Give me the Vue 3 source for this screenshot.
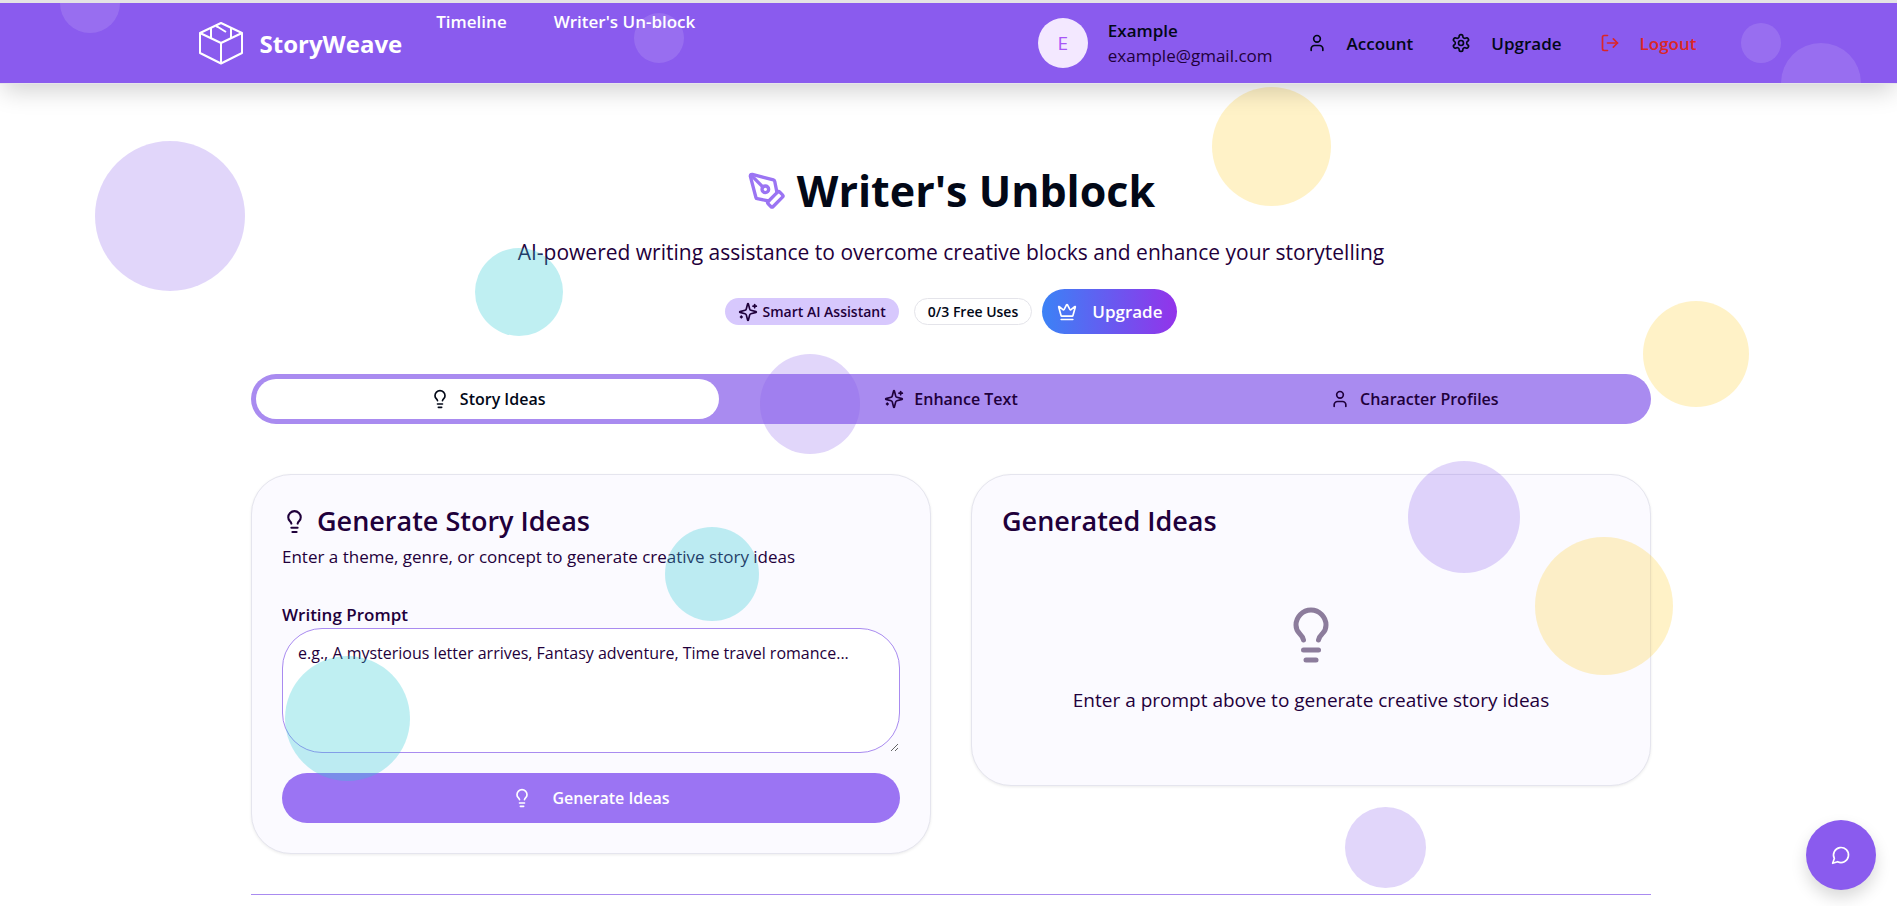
<script setup>
import { h, ref } from 'vue'

const shapes = {
  user: ['M19 21v-2a4 4 0 0 0-4-4H9a4 4 0 0 0-4 4v2', 'M8 7a4 4 0 1 0 8 0a4 4 0 1 0-8 0'],
  settings: [
    'M12.22 2h-.44a2 2 0 0 0-2 2v.18a2 2 0 0 1-1 1.73l-.43.25a2 2 0 0 1-2 0l-.15-.08a2 2 0 0 0-2.73.73l-.22.38a2 2 0 0 0 .73 2.73l.15.1a2 2 0 0 1 1 1.72v.51a2 2 0 0 1-1 1.74l-.15.09a2 2 0 0 0-.73 2.73l.22.38a2 2 0 0 0 2.73.73l.15-.08a2 2 0 0 1 2 0l.43.25a2 2 0 0 1 1 1.73V20a2 2 0 0 0 2 2h.44a2 2 0 0 0 2-2v-.18a2 2 0 0 1 1-1.73l.43-.25a2 2 0 0 1 2 0l.15.08a2 2 0 0 0 2.73-.73l.22-.39a2 2 0 0 0-.73-2.73l-.15-.08a2 2 0 0 1-1-1.74v-.5a2 2 0 0 1 1-1.74l.15-.09a2 2 0 0 0 .73-2.73l-.22-.38a2 2 0 0 0-2.73-.73l-.15.08a2 2 0 0 1-2 0l-.43-.25a2 2 0 0 1-1-1.73V4a2 2 0 0 0-2-2z',
    'M9 12a3 3 0 1 0 6 0a3 3 0 1 0-6 0'
  ],
  logout: ['M9 21H5a2 2 0 0 1-2-2V5a2 2 0 0 1 2-2h4', 'm16 17 5-5-5-5', 'M21 12H9'],
  bulb: [
    'M15 14c.2-1 .7-1.7 1.5-2.5 1-.9 1.5-2.2 1.5-3.5A6 6 0 0 0 6 8c0 1 .2 2.2 1.5 3.5.7.7 1.3 1.5 1.5 2.5',
    'M9 18h6',
    'M10 22h4'
  ],
  pen: [
    'M15.707 21.293a1 1 0 0 1-1.414 0l-1.586-1.586a1 1 0 0 1 0-1.414l5.586-5.586a1 1 0 0 1 1.414 0l1.586 1.586a1 1 0 0 1 0 1.414z',
    'm18 13-1.375-6.874a1 1 0 0 0-.746-.776L3.235 2.028a1 1 0 0 0-1.207 1.207L5.35 15.879a1 1 0 0 0 .776.746L13 18',
    'm2.3 2.3 7.286 7.286',
    'M9 11a2 2 0 1 0 4 0a2 2 0 1 0-4 0'
  ],
  sparkles: [
    'M9.937 15.5A2 2 0 0 0 8.5 14.063l-6.135-1.582a.5.5 0 0 1 0-.962L8.5 9.936A2 2 0 0 0 9.937 8.5l1.582-6.135a.5.5 0 0 1 .963 0L14.063 8.5A2 2 0 0 0 15.5 9.937l6.135 1.581a.5.5 0 0 1 0 .964L15.5 14.063a2 2 0 0 0-1.437 1.437l-1.582 6.135a.5.5 0 0 1-.963 0z',
    'M20 3v4',
    'M22 5h-4',
    'M4 17v2',
    'M5 18H3'
  ],
  crown: [
    'M11.562 3.266a.5.5 0 0 1 .876 0L15.39 8.87a1 1 0 0 0 1.516.294L21.183 5.5a.5.5 0 0 1 .798.519l-2.834 10.246a1 1 0 0 1-.956.734H5.81a1 1 0 0 1-.957-.734L2.02 6.02a.5.5 0 0 1 .798-.519l4.276 3.664a1 1 0 0 0 1.516-.294z',
    'M5 21h14'
  ],
  chat: ['M7.9 20A9 9 0 1 0 4 16.1L2 22Z']
}

const Icon = (props) =>
  h(
    'svg',
    {
      width: props.size,
      height: props.size,
      viewBox: '0 0 24 24',
      fill: 'none',
      stroke: 'currentColor',
      'stroke-width': 2,
      'stroke-linecap': 'round',
      'stroke-linejoin': 'round',
      'aria-hidden': 'true'
    },
    shapes[props.name].map((d) => h('path', { d }))
  )
Icon.props = { name: String, size: { type: Number, default: 20 } }

const tabs = [
  { id: 'ideas', label: 'Story Ideas', icon: 'bulb' },
  { id: 'enhance', label: 'Enhance Text', icon: 'sparkles' },
  { id: 'profiles', label: 'Character Profiles', icon: 'user' }
]
const active = ref('ideas')
const prompt = ref('')
</script>

<template>
  <div class="page">
    <header class="topbar">
      <div class="topbar-blobs" aria-hidden="true">
        <span class="dot dot-a"></span>
        <span class="dot dot-b"></span>
        <span class="dot dot-c"></span>
        <span class="dot dot-d"></span>
      </div>
      <div class="topbar-inner">
        <a class="brand" href="#">
          <svg class="brand-logo" viewBox="0 0 44 44" fill="none" stroke="currentColor" stroke-width="2" stroke-linejoin="round" aria-hidden="true">
            <path d="M22 2 43 12V32L22 42.500 1 32V12Z" />
            <path d="M1 12 22 22 43 12M22 22V42" />
            <path d="M12 7V17M32 7V17" />
            <path d="M17 5 19 6 27 11" />
          </svg>
          <span>StoryWeave</span>
        </a>
        <nav class="links">
          <a href="#">Timeline</a>
          <a href="#">Writer's Un-block</a>
        </nav>
        <div class="account">
          <span class="avatar">E</span>
          <div class="who">
            <strong>Example</strong>
            <span>example@gmail.com</span>
          </div>
          <div class="actions">
            <button type="button"><Icon name="user" />Account</button>
            <button type="button"><Icon name="settings" />Upgrade</button>
            <button type="button" class="danger"><Icon name="logout" />Logout</button>
          </div>
        </div>
      </div>
    </header>

    <main class="content">
      <section class="hero">
        <h1><Icon name="pen" :size="40" />Writer's Unblock</h1>
        <p>AI-powered writing assistance to overcome creative blocks and enhance your storytelling</p>
        <div class="badges">
          <span class="badge badge-fill"><Icon name="sparkles" />Smart AI Assistant</span>
          <span class="badge badge-line">0/3 Free Uses</span>
          <button type="button" class="upgrade"><Icon name="crown" />Upgrade</button>
        </div>
      </section>

      <div class="tabs" role="tablist">
        <button
          v-for="tab in tabs"
          :key="tab.id"
          type="button"
          role="tab"
          :aria-selected="active === tab.id"
          :class="{ on: active === tab.id }"
          @click="active = tab.id"
        >
          <Icon :name="tab.icon" />{{ tab.label }}
        </button>
      </div>

      <div class="cards">
        <section class="card">
          <div class="card-head">
            <h2><Icon name="bulb" :size="25" />Generate Story Ideas</h2>
            <p>Enter a theme, genre, or concept to generate creative story ideas</p>
          </div>
          <form class="form" @submit.prevent>
            <label for="prompt">Writing Prompt</label>
            <textarea
              id="prompt"
              v-model="prompt"
              placeholder="e.g., A mysterious letter arrives, Fantasy adventure, Time travel romance..."
            ></textarea>
            <button type="submit" class="generate"><Icon name="bulb" />Generate Ideas</button>
          </form>
        </section>

        <section class="card">
          <div class="card-head">
            <h2>Generated Ideas</h2>
          </div>
          <div class="empty">
            <Icon name="bulb" :size="60" />
            <p>Enter a prompt above to generate creative story ideas</p>
          </div>
        </section>
      </div>

      <hr class="rule" />
    </main>

    <div class="blobs" aria-hidden="true">
      <span class="blob violet blob-1"></span>
      <span class="blob yellow blob-2"></span>
      <span class="blob cyan blob-3"></span>
      <span class="blob violet blob-4"></span>
      <span class="blob yellow blob-5"></span>
      <span class="blob cyan blob-6"></span>
      <span class="blob cyan blob-7"></span>
      <span class="blob violet blob-8"></span>
      <span class="blob yellow blob-9"></span>
      <span class="blob violet blob-10"></span>
    </div>

    <button type="button" class="chat" aria-label="Open chat"><Icon name="chat" /></button>
  </div>
</template>

<style>
body {
  margin: 0;
  background: #fff;
}
</style>

<style scoped>
.page {
  position: relative;
  min-height: 100vh;
  box-sizing: border-box;
  border-top: 3px solid #e4e4e4;
  overflow: hidden;
  color: #1f003b;
  font-family: "Segoe UI", "Open Sans", "Noto Sans", sans-serif;
  font-size: 16px;
  line-height: 25px;
}
.page *,
.page *::before {
  box-sizing: border-box;
}
svg {
  flex: none;
}
button {
  font: inherit;
  color: inherit;
  border: 0;
  padding: 0;
  background: none;
  cursor: pointer;
}
a {
  color: inherit;
  text-decoration: none;
}

.topbar {
  position: relative;
  z-index: 3;
  background: #8a5bee;
  border-bottom: 1px solid #e5e5ea;
  box-shadow: 0 10px 25px -3px rgba(0, 0, 0, 0.18);
}
.topbar-blobs {
  position: absolute;
  inset: 0;
  overflow: hidden;
}
.dot {
  position: absolute;
  border-radius: 50%;
  background: rgba(255, 255, 255, 0.12);
}
.dot-a { left: 60px; top: -30px; width: 60px; height: 60px; }
.dot-b { left: 634px; top: 10px; width: 50px; height: 50px; }
.dot-c { right: 116px; top: 20px; width: 40px; height: 40px; }
.dot-d { right: 36px; top: 40px; width: 80px; height: 80px; }
.topbar-inner {
  position: relative;
  display: flex;
  align-items: center;
  max-width: 1500px;
  height: 80px;
  margin: 0 auto;
  padding-right: 2px;
  font-size: 17px;
}
.brand {
  display: flex;
  align-items: center;
  gap: 17px;
  color: #fff;
  font-size: 24px;
  font-weight: 700;
}
.brand-logo {
  width: 44px;
  height: 44px;
}
.links {
  display: flex;
  align-self: flex-start;
  gap: 47px;
  margin-left: 34px;
  padding-top: 6px;
  color: #fff;
  font-weight: 600;
}
.account {
  display: flex;
  align-items: center;
  margin-left: auto;
}
.avatar {
  display: grid;
  place-items: center;
  width: 50px;
  height: 50px;
  margin-right: 20px;
  border-radius: 50%;
  background: #f3e8ff;
  color: #a855f7;
  font-size: 19px;
}
.who {
  display: flex;
  flex-direction: column;
}
.who strong {
  color: #020817;
  font-weight: 600;
}
.actions {
  display: flex;
  gap: 38px;
  margin-left: 34px;
  color: #020817;
  font-weight: 600;
}
.actions button {
  display: flex;
  align-items: center;
  gap: 20px;
}
.actions .danger {
  color: #dc2626;
}

.content {
  max-width: 1405px;
  margin: 0 auto;
  padding: 77px 0 11px 5px;
}
.hero {
  display: flex;
  flex-direction: column;
  align-items: center;
}
h1,
h2,
p {
  margin: 0;
}
h1 {
  display: flex;
  align-items: center;
  gap: 10px;
  color: #020817;
  font-size: 43px;
  font-weight: 700;
  line-height: 60px;
}
h1 svg {
  color: #9b74f3;
}
.hero p {
  margin-top: 16px;
  font-size: 21px;
  line-height: 30px;
}
.badges {
  display: flex;
  align-items: center;
  gap: 15px;
  margin-top: 22px;
}
.badge {
  display: flex;
  align-items: center;
  gap: 5px;
  height: 27px;
  padding: 0 13px;
  border-radius: 14px;
  font-size: 14px;
  font-weight: 600;
}
.badge-fill {
  background: #d7c8fd;
}
.badge-line {
  border: 1px solid #e4e4ea;
  color: #020817;
}
.upgrade {
  display: flex;
  align-items: center;
  gap: 15px;
  height: 45px;
  margin-left: -5px;
  padding: 0 15px;
  border-radius: 23px;
  background: linear-gradient(90deg, #3b82f6, #9333ea);
  color: #fff;
  font-size: 17px;
  font-weight: 600;
}

.tabs {
  display: grid;
  grid-template-columns: repeat(3, 1fr);
  margin-top: 40px;
  padding: 5px;
  border-radius: 25px;
  background: #a98bf0;
}
.tabs button {
  display: flex;
  align-items: center;
  justify-content: center;
  gap: 10px;
  height: 40px;
  border-radius: 20px;
  font-weight: 600;
}
.tabs .on {
  background: #fff;
  color: #020817;
}

.cards {
  display: grid;
  grid-template-columns: 1fr 1fr;
  align-items: start;
  gap: 40px;
  margin-top: 50px;
}
.card {
  padding: 30px;
  border: 1px solid #e5e5ee;
  border-radius: 40px;
  background: #fbfaff;
  box-shadow: 0 1px 3px rgba(0, 0, 0, 0.08);
}
.card-head {
  padding-bottom: 30px;
}
h2 {
  display: flex;
  align-items: center;
  gap: 10px;
  font-size: 27px;
  font-weight: 600;
  line-height: 32px;
}
.card-head p {
  margin: 6px 0 2px;
  font-size: 17px;
  line-height: 27px;
}
.form {
  display: flex;
  flex-direction: column;
}
label {
  font-size: 17px;
  font-weight: 600;
  line-height: 26px;
}
textarea {
  display: block;
  width: 100%;
  height: 125px;
  padding: 12px 15px;
  border: 1px solid #a98bf0;
  border-radius: 40px;
  background: #fff;
  color: inherit;
  font: inherit;
  resize: vertical;
  overflow: auto;
}
textarea::placeholder {
  color: #1f003b;
  opacity: 1;
}
.generate {
  display: flex;
  align-items: center;
  justify-content: center;
  gap: 20px;
  height: 50px;
  margin-top: 20px;
  border-radius: 25px;
  background: #9b74f3;
  color: #fff;
  font-weight: 600;
}
.empty {
  display: flex;
  flex-direction: column;
  align-items: center;
  gap: 20px;
  padding: 38px 0 40px;
  font-size: 19px;
  line-height: 30px;
}
.empty svg {
  opacity: 0.5;
}
.rule {
  height: 1px;
  margin: 40px 0 0;
  border: 0;
  background: #a98bf0;
}

.blobs {
  position: absolute;
  inset: 0;
  z-index: 2;
  pointer-events: none;
}
.blob {
  position: absolute;
  border-radius: 50%;
}
.violet { background: rgba(135, 91, 235, 0.25); }
.yellow { background: rgba(255, 207, 47, 0.27); }
.cyan { background: rgba(42, 202, 212, 0.3); }
.blob-1 { left: 95px; top: 138px; width: 150px; height: 150px; }
.blob-2 { right: 566px; top: 84px; width: 119px; height: 119px; }
.blob-3 { left: 475px; top: 245px; width: 88px; height: 88px; }
.blob-4 { left: 760px; top: 351px; width: 100px; height: 100px; }
.blob-5 { right: 148px; top: 298px; width: 106px; height: 106px; }
.blob-6 { left: 665px; top: 524px; width: 94px; height: 94px; }
.blob-7 { left: 285px; top: 653px; width: 125px; height: 125px; }
.blob-8 { right: 377px; top: 458px; width: 112px; height: 112px; }
.blob-9 { right: 224px; top: 534px; width: 138px; height: 138px; }
.blob-10 { right: 471px; top: 804px; width: 81px; height: 81px; }

.chat {
  position: fixed;
  right: 21px;
  bottom: 16px;
  z-index: 4;
  display: grid;
  place-items: center;
  width: 70px;
  height: 70px;
  border-radius: 50%;
  background: #8a5bee;
  box-shadow: 0 8px 16px rgba(0, 0, 0, 0.15);
  color: #fff;
}
</style>
